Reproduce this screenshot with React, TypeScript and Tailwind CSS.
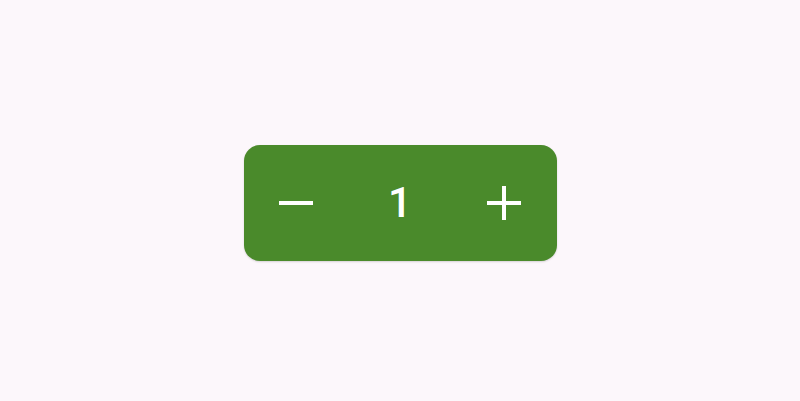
import { useState } from 'react';

// Quantity stepper: minus / value / plus on a green pill
export default function App() {
    const [count, setCount] = useState(1);

    return (
        <div className="w-full h-[401px] bg-[#fcf7fb] flex items-center justify-center pt-[5px]">
            <div className="w-[313px] h-[116px] rounded-[16px] bg-[#4a8a2b] grid grid-cols-3 items-center text-white font-['Roboto',sans-serif] shadow-[0_1px_2px_rgba(0,0,0,0.15)]">
                <button
                    onClick={() => setCount((c) => Math.max(0, c - 1))}
                    className="h-full flex items-center justify-center"
                    aria-label="Decrease"
                >
                    <svg width="34" height="34" viewBox="0 0 34 34">
                        <rect x="0" y="15" width="34" height="4" fill="#ffffff" />
                    </svg>
                </button>
                <span className="text-[42px] leading-none text-center font-medium">{count}</span>
                <button
                    onClick={() => setCount((c) => c + 1)}
                    className="h-full flex items-center justify-center"
                    aria-label="Increase"
                >
                    <svg width="34" height="34" viewBox="0 0 34 34">
                        <rect x="0" y="15" width="34" height="4" fill="#ffffff" />
                        <rect x="15" y="0" width="4" height="34" fill="#ffffff" />
                    </svg>
                </button>
            </div>
        </div>
    );
}
